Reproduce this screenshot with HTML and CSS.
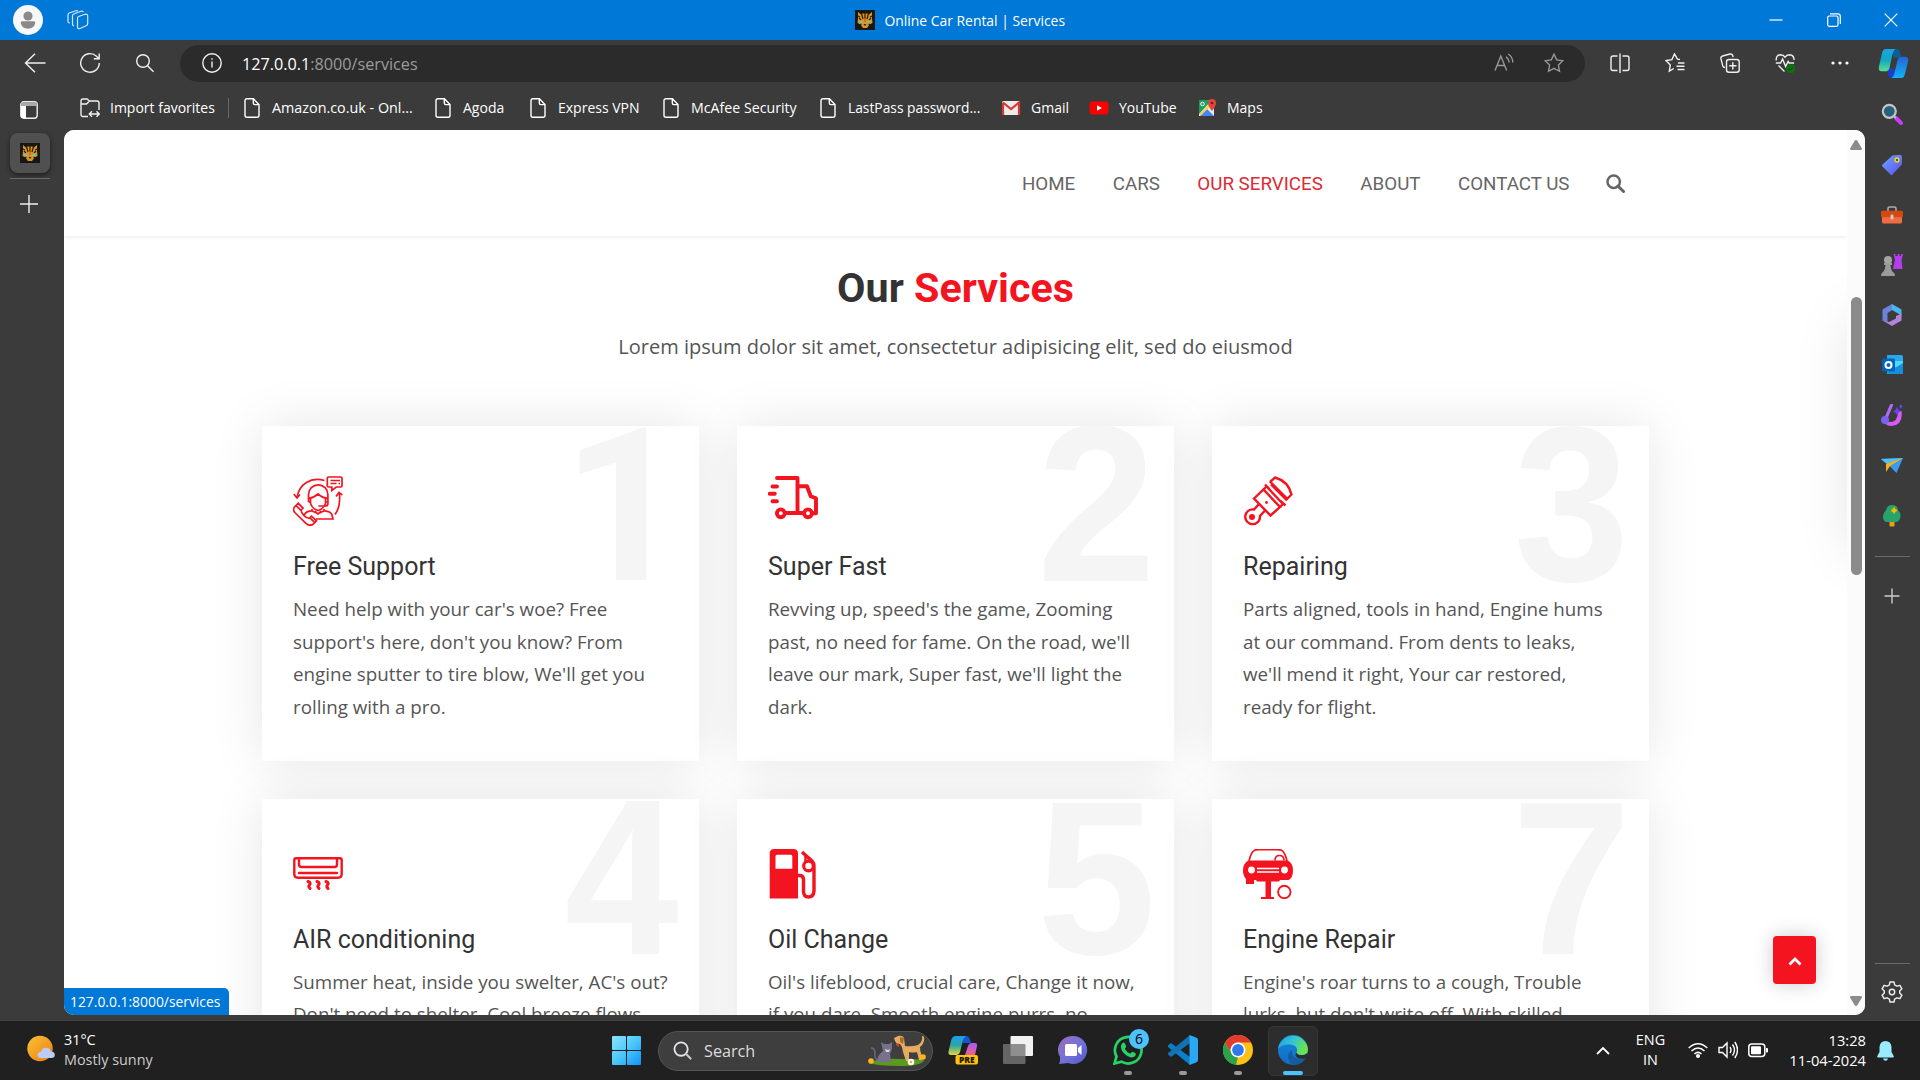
FILE: index.html
```html
<!DOCTYPE html>
<html lang="en">
<head>
<meta charset="utf-8">
<title>Online Car Rental | Services</title>
<link rel="stylesheet" href="styles.css">
</head>
<body>
<svg class="defs" aria-hidden="true">
  <symbol id="doc" viewBox="0 0 20 20"><path d="M4.2.8h7.2L17 6.5v10.800a1.900 1.900 0 0 1-1.900 1.900H4.900A1.900 1.900 0 0 1 3 17.300V2.700A1.900 1.900 0 0 1 4.900.8M11.300 1v4.100a1.500 1.500 0 0 0 1.500 1.500h4" fill="none" stroke="#fff" stroke-width="1.400"/></symbol>
  <symbol id="cat" viewBox="0 0 20 20">
    <path d="M0 0h20v20H0z" fill="#171717"/>
    <path d="M3 2l3 2.500 1.500-1h5l1.500 1L17 2v6l.5 5-3 1.500L12 18H8l-2.500-3.500L2.500 13 3 8z" fill="#d9981c"/>
    <path d="M6.500 3.500L8 9M10 3V9M13.500 3.500L12 9M4 8l2 2M16 8l-2 2M4.500 15l2-1M15.500 15l-2-1M3 6l2 1M17 6l-2 1" stroke="#2a1a08" stroke-width="1.200"/>
    <path d="M9.400 8h1.200v4H9.400z" fill="#e2542a"/>
    <path d="M4.500 11l3 1.800M15.500 11l-3 1.800" stroke="#54c8f0" stroke-width="1.700"/>
    <path d="M8.500 14h3L10 16z" fill="#222"/>
  </symbol>
</svg>

<header class="titlebar">
  <svg class="avatar" viewBox="0 0 30 30"><circle cx="15" cy="15" r="15" fill="#f8f8f8"/><circle cx="15" cy="11" r="4.600" fill="#8a8a8a"/><path d="M9 16.300h12a1.200 1.200 0 0 1 1.200 1.200c0 3.700-3.300 6.200-7.200 6.200s-7.200-2.500-7.200-6.200A1.200 1.200 0 0 1 9 16.300z" fill="#8a8a8a"/></svg>
  <svg class="workspaces" viewBox="0 0 22 20"><g fill="none" stroke="#d5e8f9" stroke-width="1.200"><path d="M11.500 6.500l6.500-2.200q2.700-.6 2.700 1.700v7.500q0 1.500-1.500 2.200l-6.200 2.800q-2.500.8-2.500-1.500V8.500q0-1.500 1-2z"/><path d="M7 15.500q-1.500.3-1.500-1.500V6q0-1.500 1.200-2l7.300-2.800q1.500-.5 2.500.8M3 13q-2 0-2-1.500V5q0-1.500 1.200-2L9 .7q1-.3 2 .3"/></g></svg>
  <div class="window-title"><svg class="i20"><use href="#cat"/></svg><span>Online Car Rental | Services</span></div>
  <div class="window-buttons">
    <svg viewBox="0 0 14 14"><path d="M.5 7h13" stroke="#fff" stroke-width="1.200"/></svg>
    <svg viewBox="0 0 14 14"><g fill="none" stroke="#fff" stroke-width="1.200"><rect x=".7" y="3" width="10.300" height="10.300" rx="1.500"/><path d="M3 .8h7.800a2.500 2.500 0 0 1 2.500 2.500V11"/></g></svg>
    <svg viewBox="0 0 14 14"><path d="M.7.7l12.600 12.600M13.300.7L.7 13.300" stroke="#fff" stroke-width="1.200"/></svg>
  </div>
</header>

<div class="toolbar">
  <button class="tool"><svg class="i22" viewBox="0 0 22 22"><path d="M21.500 11H1.500M11 1.800L1.500 11l9.500 9.200" class="line"/></svg></button>
  <button class="tool"><svg class="i22" viewBox="0 0 22 22"><path d="M20.300 11A9.300 9.300 0 1 1 17.500 4.300L19.800 6.500M20.200 1.500v5.300h-5.400" class="line"/></svg></button>
  <button class="tool"><svg class="i20" viewBox="0 0 20 20"><circle cx="8" cy="8" r="6.300" class="line"/><path d="M12.500 12.700l6 6" class="line"/></svg></button>
  <div class="address">
    <svg class="i20" viewBox="0 0 20 20"><circle cx="10" cy="10" r="9.200" class="line"/><path d="M10 8.500v6M10 5.200v1.600" class="line"/></svg>
    <span class="url">127.0.0.1<span>:8000/services</span></span>
    <svg class="i20 dim" viewBox="0 0 20 20"><path d="M1 17.500L6.800 3l5.900 14.500M3 12.500h7.700M12 3.800q3 2 3 5.700M14.200 1q4.600 3 4.600 8.500" class="line"/></svg>
    <svg class="i20 dim" viewBox="0 0 20 20"><path d="M10 1.200l2.700 5.700 6.200.8-4.500 4.400 1.100 6.200L10 15.300l-5.500 3 1.100-6.200L1.100 7.700l6.200-.8z" class="line"/></svg>
  </div>
  <button class="tool"><svg class="i20" viewBox="0 0 20 20"><path d="M7.500 3H3a2 2 0 0 0-2 2v10.500a2 2 0 0 0 2 2h4.500M12.500 3H17a2 2 0 0 1 2 2v10.500a2 2 0 0 1-2 2h-4.500M10 .5v19.500" class="line"/></svg></button>
  <button class="tool"><svg class="i20" viewBox="0 0 20 20"><path d="M15 6.500l-2.600-.3L9.500.9 6.900 6.600 1 7.600l4.300 4.300-1 6.200 4.500-2.600M13 10h6.500M11.500 13.200h8M12.500 16.500h7" class="line"/></svg></button>
  <button class="tool"><svg class="i20" viewBox="0 0 20 20"><path d="M5 14.500q-1.600 0-2.200-1.600L.9 5.700Q.5 3.600 2.600 3L9.900 1q2-.4 2.800 1.400l.4 1.800" class="line"/><rect x="6.500" y="6.500" width="12.700" height="12.700" rx="2.500" class="line"/><path d="M12.800 9.200v7.300M9.200 12.800h7.300" class="line"/></svg></button>
  <button class="tool"><svg class="i20" viewBox="0 0 20 20"><path d="M1.200 7.500Q.8 2 5.500 1.700 8.500 1.700 10 4.200 11.700 1.700 14.500 1.700q4.700.3 4.500 5.300M.8 10h4.800l2-4 3 7.500 2.500-5 1 1.500h5M3.500 12.500l6 6" class="line"/><circle cx="15.700" cy="15.700" r="4.600" fill="#0e700e"/><path d="M13.800 15.800l1.400 1.300 2.500-2.600" stroke="#063c06" fill="none"/></svg></button>
  <button class="tool"><svg class="i20" viewBox="0 0 20 20" fill="#fff"><circle cx="3" cy="10" r="1.600"/><circle cx="10" cy="10" r="1.600"/><circle cx="17" cy="10" r="1.600"/></svg></button>
  <button class="tool last"><svg class="copilot" viewBox="0 0 32 32"><defs><linearGradient id="cp1" x1="0" y1="0" x2="0" y2="1"><stop offset="0" stop-color="#1ba5e8"/><stop offset=".5" stop-color="#12a8c0"/><stop offset="1" stop-color="#5fdc8f"/></linearGradient><linearGradient id="cp2" x1="0" y1="1" x2="0" y2="0"><stop offset="0" stop-color="#12b4f4"/><stop offset="1" stop-color="#2564d6"/></linearGradient></defs><path d="M14 1h5q3 0 4 4l1 5h-8z" fill="#0c5f96"/><path d="M9 22l4-1 6 2-2 8h-2q-3 0-4-3z" fill="#1c3ecf"/><path d="M8 1h10q-2 1-3 5l-3 14q-1 4-5 4H4q-4 0-3-5L4 6q1-5 4-5z" fill="url(#cp1)"/><path d="M24 31H14q2-1 3-5l3-13q1-4 5-4h3q4 0 3 5l-3 12q-1 5-4 5z" fill="url(#cp2)"/></svg></button>
</div>

<div class="shell">
  <aside class="tabs">
    <svg class="i18 tab-menu" viewBox="0 0 18 18"><rect x=".8" y=".8" width="16.400" height="16.400" rx="3" class="line"/><path d="M1 1.500h16v3.500H1z" fill="#aaa"/><path d="M1 5h5v12H1z" fill="#fff"/></svg>
    <div class="tab"><svg class="i20"><use href="#cat"/></svg></div>
    <hr>
    <svg class="i18 new-tab" viewBox="0 0 18 18"><path d="M9 0v18M0 9h18" class="line"/></svg>
  </aside>

  <div class="center">
    <nav class="favorites">
      <a><svg class="i20" viewBox="0 0 20 20"><path d="M8 18.500H3a2 2 0 0 1-2-2V3a2 2 0 0 1 2-2h4l2.500 2H17a2 2 0 0 1 2 2v7M1 6h5.500L9.500 3M9.500 16h9.500M12 13.300L9.300 16l2.700 2.700M16.500 13.300l2.700 2.700-2.700 2.700" class="line"/></svg><span>Import favorites</span><i></i></a>
      <a><svg class="i20"><use href="#doc"/></svg><span class="w-amazon">Amazon.co.uk - Onl...</span></a>
      <a><svg class="i20"><use href="#doc"/></svg><span>Agoda</span></a>
      <a><svg class="i20"><use href="#doc"/></svg><span>Express VPN</span></a>
      <a><svg class="i20"><use href="#doc"/></svg><span class="w-mcafee">McAfee Security</span></a>
      <a><svg class="i20"><use href="#doc"/></svg><span class="w-lastpass">LastPass password...</span></a>
      <a><svg class="i20" viewBox="0 0 20 20"><rect x="1" y="3" width="18" height="14" rx="1.500" fill="#ececec"/><path d="M2 4.500l8 6.500 8-6.500V17M2 4.500V17" fill="none" stroke="#d93a30" stroke-width="2.200"/></svg><span>Gmail</span></a>
      <a><svg class="i20" viewBox="0 0 20 20"><rect x=".5" y="3.500" width="19" height="13" rx="3" fill="#f00"/><path d="M8 7.300l5 2.700-5 2.700z" fill="#fff"/></svg><span>YouTube</span></a>
      <a><svg class="i20" viewBox="0 0 20 20"><path d="M2 2h15v16H2z" fill="#e8e8e8"/><path d="M2 2h13L2 16z" fill="#1e9e5a"/><path d="M3 18l7-7 7 7z" fill="#4385f5"/><path d="M3 17L16 4" stroke="#f8cf3f" stroke-width="2"/><path d="M15 13q-4-5-4-8a4 4 0 0 1 8 0q0 3-4 8z" fill="#e2443a"/><circle cx="15" cy="5" r="1.300" fill="#7c1a14"/><circle cx="5.500" cy="6" r="1.800" fill="none" stroke="#fff"/></svg><span>Maps</span></a>
    </nav>

    <div class="page">
      <div class="site">
        <div class="carousel-edge"></div>
        <nav class="site-nav">
          <a>HOME</a><a>CARS</a><a class="active">OUR SERVICES</a><a>ABOUT</a><a>CONTACT US</a>
          <svg viewBox="0 0 19 19"><circle cx="7.700" cy="7.700" r="6.200" fill="none" stroke="#666" stroke-width="2.500"/><path d="M12 12l5.500 5.500" stroke="#666" stroke-width="3" stroke-linecap="round"/></svg>
        </nav>
        <main>
          <h1>Our <span>Services</span></h1>
          <p class="lead">Lorem ipsum dolor sit amet, consectetur adipisicing elit, sed do eiusmod</p>
          <section class="cards">
            <article class="card">
              <b class="number one">1</b>
              <svg viewBox="0 0 50 50"><g fill="none" stroke="#f41420" stroke-width="1.700"><path d="M31.500 4.500C18 .5 6 8 4 21.500M.8 18L4 22l3-3.500"/><path d="M42 38.500q6-8 4.300-21.500M43 20.500l3-4 3.300 2.500"/><path d="M35.500 1h12.300q1.200 0 1.200 1.200v7.600q0 1.200-1.200 1.200h-4.500l-4.500 3.500V11h-3.300q-1.200 0-1.200-1.200V2.200Q34.300 1 35.500 1z"/><path d="M37.500 4.500H47M37.500 7.500h6M45.500 7.500H47"/><path d="M15.500 26v-7.500a9.700 9.700 0 0 1 19.400 0V28q0 2-3 2h-6.500M15.500 22.500q5-.5 9.500-4.500 4.500 4 10 4.500M17.500 22.500v5q2 5.500 7.500 7 5.500-1.500 7.500-7v-5M15.500 26h2M35 26h-2.500M19 33v2l6 2.500 6-2.500v-2M22 35l3 3 3-3"/><path d="M11.500 39q.5-3.500 7-4.200M31.500 34.800q6.500.7 7.300 3.700l1.200 4.500H23"/><path d="M1.500 31l3.700-3.700 4.800 4.800-2 2q0 2.500 3 5.500t5.500 2.600l2-2 5 4.600-3.500 3.500q-3.500 2.200-7-1L2.300 37Q-.8 33.700 1.500 31zM3 29.500l4.700 4.700M17 41.800l4.800 4.800"/></g></svg>
              <h2>Free Support</h2>
              <p>Need help with your car's woe? Free support's here, don't you know? From engine sputter to tire blow, We'll get you rolling with a pro.</p>
            </article>
            <article class="card">
              <b class="number">2</b>
              <svg viewBox="0 0 50 50"><g fill="none" stroke="#f41420" stroke-width="3.900" stroke-linecap="round" stroke-linejoin="round"><path d="M9 2h20.500v34.500M29.500 10.300H39l3.700 10 5.300 2v15h-3M17.500 37h17"/><path d="M4.500 10.500h4.500M1.800 17.800h5M4.500 25.300h4.500"/><circle cx="12.800" cy="37.300" r="3.900"/><circle cx="40" cy="37.300" r="3.900"/></g></svg>
              <h2>Super Fast</h2>
              <p>Revving up, speed's the game, Zooming past, no need for fame. On the road, we'll leave our mark, Super fast, we'll light the dark.</p>
            </article>
            <article class="card">
              <b class="number three">3</b>
              <svg viewBox="0 0 50 50"><g fill="none" stroke="#f41420" stroke-width="2.400"><path d="M11 22.500l9.500-9L37 31l-9.500 8.500z"/><path d="M20.500 13.500l3-3M37 31l3-3M24.500 11.500L40 28M28 8.500L44 24.500M22 8.500l4.500 4.500M37.500 25l5 4.500M27 5.500l17 17M27 6L32 1.500C41 4 46.500 10.500 48.500 18.500L44 23"/><path d="M16.500 27.500L11 33.500a7.400 7.400 0 1 0 6 6.500l5-5.500"/></g><circle cx="9" cy="41" r="3" fill="#f41420"/><circle cx="23.500" cy="26.500" r="1.400" fill="#f41420"/></svg>
              <h2>Repairing</h2>
              <p>Parts aligned, tools in hand, Engine hums<br>at our command. From dents to leaks,<br>we'll mend it right, Your car restored,<br>ready for flight.</p>
            </article>
            <article class="card">
              <b class="number four">4</b>
              <svg viewBox="0 0 50 50"><g fill="none" stroke="#f41420" stroke-width="2.400" stroke-linecap="round"><path d="M3 9.300h44q1.700 0 1.700 1.700v14q0 3.700-3.700 3.700H5q-3.700 0-3.700-3.700V11q0-1.700 1.700-1.700z"/><path d="M6 10v5.500q0 2.500 2.500 2.500h33q2.500 0 2.500-2.500V10M6 24h38"/><path d="M15 32.500q3.500 1.500 1.500 3.500-1.500 1.500.5 3.500M24 32.500q3.500 1.500 1.500 3.500-1.500 1.500.5 3.500M33 32.500q3.500 1.500 1.500 3.500-1.500 1.500.5 3.500" stroke-width="3"/></g></svg>
              <h2>AIR conditioning</h2>
              <p>Summer heat, inside you swelter, AC's out? Don't need to shelter. Cool breeze flows, comfort grows.</p>
            </article>
            <article class="card">
              <b class="number low">5</b>
              <svg viewBox="0 0 50 50"><path fill="#f41420" fill-rule="evenodd" d="M6 0h19.500q4.500 0 4.500 4.500V49.500H1.700V4.500Q1.700 0 6 0zM9 5.700q-1.500 0-1.500 1.500v12.500H24.300V7.200q0-1.500-1.500-1.500z"/><g fill="none" stroke="#f41420"><path d="M30 26.500h1.500q4 0 4 4v11.500q0 6 5 6t5.500-6V17Q46 14 44 12L34 3" stroke-width="3.400"/><circle cx="40.500" cy="17" r="4.800" stroke-width="3.200"/><path d="M37.500 7v7" stroke-width="2.500"/></g></svg>
              <h2>Oil Change</h2>
              <p>Oil's lifeblood, crucial care, Change it now, if you dare. Smooth engine purrs, no trouble stirs.</p>
            </article>
            <article class="card">
              <b class="number low">7</b>
              <svg viewBox="0 0 50 50"><path fill="#f41420" d="M5 11.500h40q5 3 5 9.500 0 8-4.500 10H37l-1 1.500h-8V48h3v2H18v-2h4.500V32.500H14l-1-1.500h-2v4H3v-5q-3-3-3-9t5-9.500z"/><path d="M6 12Q8 3 11.500 1.200q1-.5 4-.5h19q3 0 4 .5Q42 3 44 12M32 11.500q0-5 4.500-5t4.500 5" fill="none" stroke="#f41420" stroke-width="1.700"/><circle cx="8.500" cy="21" r="3.400" fill="#fff"/><circle cx="41.500" cy="21" r="3.400" fill="#fff"/><path d="M14 19.500h22M14 23h22" stroke="#fff" stroke-width="1.300"/><circle cx="41.300" cy="43" r="6.200" fill="none" stroke="#f41420" stroke-width="1.900"/></svg>
              <h2>Engine Repair</h2>
              <p>Engine's roar turns to a cough, Trouble lurks, but don't write off. With skilled hands, it stands.</p>
            </article>
          </section>
        </main>
        <a class="to-top"><svg viewBox="0 0 14 9"><path d="M1.500 7.500L7 2l5.500 5.500" fill="none" stroke="#fff" stroke-width="2.800"/></svg></a>
      </div>
      <div class="scrollbar">
        <svg viewBox="0 0 12 10"><path d="M6 0q.8 0 1.300.8l4.500 7.400q.5 1.800-1 1.800H1.200q-1.500 0-1-1.800L4.700.8Q5.200 0 6 0z" fill="#8b8b8b"/></svg>
        <div class="thumb"></div>
        <svg class="down" viewBox="0 0 12 10"><path d="M6 0q.8 0 1.300.8l4.500 7.400q.5 1.800-1 1.800H1.200q-1.500 0-1-1.800L4.700.8Q5.200 0 6 0z" fill="#8b8b8b"/></svg>
      </div>
      <div class="status">127.0.0.1:8000/services</div>
    </div>
  </div>

  <aside class="sidebar">
    <a><svg class="i22" viewBox="0 0 22 22"><path d="M15 15l5 5" stroke="#c63df5" stroke-width="4" stroke-linecap="round"/><path d="M12.500 12.500l2.500 2.500" stroke="#bbb" stroke-width="2"/><circle cx="8.300" cy="8.300" r="6.500" fill="#24607f" stroke="#c4c4c4" stroke-width="2.200"/></svg></a>
    <a><svg class="i22" viewBox="0 -1 22 22"><defs><linearGradient id="tg" x2="1" y2="1"><stop stop-color="#6fa8ff"/><stop offset="1" stop-color="#5a4df0"/></linearGradient></defs><path d="M11.500 1.500L19 .8q2 0 2 2v7.500L11.500 20.500q-1 1-2 0L1.500 12.500q-1-1 0-2z" fill="url(#tg)"/><circle cx="16" cy="6" r="2.700" fill="#f2cb23"/><circle cx="16" cy="6" r="1" fill="#333"/></svg></a>
    <a><svg class="i22" viewBox="0 -2 22 22"><path d="M7 6V3.500Q7 2 8.500 2h5Q15 2 15 3.500V6" fill="none" stroke="#aaa" stroke-width="1.600"/><rect x="1" y="8" width="20" height="10.500" rx="1.500" fill="#ef6c42"/><rect x="0" y="5.700" width="22" height="6.500" rx="1.200" fill="#d5480f"/><rect x="9.500" y="9.500" width="3" height="5" rx="1.200" fill="#c9c9c9"/></svg></a>
    <a><svg class="i22" viewBox="0 0 22 22"><path d="M12.500 0h2v2h2V0h2v2h1.500V0h2l-1.500 6 1 9H12l2-9z" fill="#b43df0"/><circle cx="7" cy="6" r="4" fill="#a5a5a5"/><path d="M3 9h8v2H9.500q0 5 3.500 8 1 1 1 3H0q0-2 1-3 3.500-3 3.500-8H3z" fill="#9b9b9b"/></svg></a>
    <a><svg class="i22" viewBox="0 0 22 22"><path d="M11 0l9.500 5.500v6L11 6 7.500 8z" fill="#45b9ec"/><path d="M11 0L1.500 5.500v11l5 1.500V9L11 6z" fill="#6b83dd"/><path d="M1.500 16.500L11 22l9.500-5.500v-7L15 12v2.500L8 18z" fill="#b184d8"/></svg></a>
    <a><svg class="i22" viewBox="-1 0 22 22"><path d="M5 1h14.500q1.500 0 1.500 1.500V20H5z" fill="#28a8ea"/><path d="M13 7h8v6h-8z" fill="#50d9ff"/><path d="M4 20h17V9l-8 5z" fill="#1490df"/><rect x="0" y="4.500" width="13" height="13" rx="1.500" fill="#0364b8"/><circle cx="6.500" cy="11" r="3" fill="none" stroke="#fff" stroke-width="2"/></svg></a>
    <a><svg class="i22" viewBox="0 0 22 22"><path d="M2.500 13q1 5 7 5 7 0 7.500-10l3.500-1q2 14-10 15Q3 22 1 14z" fill="#d65bf0"/><path d="M10.500 1L5 14" stroke="#a86cf5" stroke-width="3.200" stroke-linecap="round"/><circle cx="4" cy="16" r="4" fill="#7a62f0"/><path d="M16 3l1.500 3 3 1-3 1.500L16 11l-1.500-2.500-2.500-1L14.500 6zM20 0l1 2 1 .5-1.500 1L20 5l-1-1.500-1-1z" fill="#6644f0"/></svg></a>
    <a><svg class="i22" viewBox="0 0 22 22"><path d="M0 5l22-1-6.500 15-6-6z" fill="#3b9bea"/><path d="M0 5l22-1L6 10z" fill="#4cc2f5"/><path d="M5 10L22 4 9 12l-4 6z" fill="#f5b21b"/></svg></a>
    <a><svg class="i22" viewBox="0 0 22 22"><path d="M8.500 15h5v5.500q0 1-1 1h-3q-1 0-1-1z" fill="#eaa012"/><path d="M11 0q5.500 0 6 5 3 3 2.500 6.500-1 5.500-5 5.500h-8q-4.500 0-4.500-5 0-4 3-6.500Q6 0 11 0z" fill="#27a36b"/><path d="M13 2.500l1.200 1.800 1.800 1.200-1.800 1.200L13 8.500l-1.200-1.800L10 5.500l1.800-1.200z" fill="#f8b800" stroke="#f8b800"/></svg></a>
    <hr>
    <svg class="i18 add" viewBox="0 0 18 18"><path d="M9 1.500v15M1.500 9h15" class="line"/></svg>
    <hr class="bottom">
    <svg class="i22 gear" viewBox="0 0 22 22"><path d="M9 1h4l.7 3 2.200 1.200 3-.9 2 3.500-2.200 2.100v2.200l2.200 2.100-2 3.500-3-.9-2.200 1.200L13 21H9l-.7-3-2.200-1.200-3 .9-2-3.500 2.200-2.100V9.900L1.100 7.800l2-3.500 3 .9L8.300 4z" class="line" stroke-linejoin="round"/><circle cx="11" cy="11" r="2.700" class="line"/></svg>
  </aside>
</div>

<footer class="taskbar">
  <div class="weather">
    <svg viewBox="0 0 28 28"><defs><linearGradient id="sun" x1="0" y1="0" x2="1" y2="1"><stop stop-color="#f7c436"/><stop offset="1" stop-color="#f07a12"/></linearGradient></defs><circle cx="13" cy="13.500" r="12.700" fill="url(#sun)"/><path d="M14 23q-3.500 0-3.500-3t3.500-3.200q1-4 5-4 4.300 0 4.800 3.800 4 .2 4 3.400T24 23z" fill="#b9cdf6"/></svg>
    <div><span>31°C</span><span class="sub">Mostly sunny</span></div>
  </div>
  <svg class="start" viewBox="0 0 29 29"><defs><linearGradient id="win" gradientUnits="userSpaceOnUse" x1="0" y1="0" x2="29" y2="29"><stop stop-color="#8de2fb"/><stop offset=".5" stop-color="#4cc8fa"/><stop offset="1" stop-color="#0f92f8"/></linearGradient></defs><g fill="url(#win)"><rect width="14" height="14" rx="1"/><rect x="15" width="14" height="14" rx="1"/><rect y="15" width="14" height="14" rx="1"/><rect x="15" y="15" width="14" height="14" rx="1"/></g></svg>
  <div class="search">
    <svg class="lens" viewBox="0 0 20 20"><circle cx="8.500" cy="8.500" r="7" fill="none" stroke="#e4e4ea" stroke-width="1.900"/><path d="M13.500 13.500l5 5" stroke="#c9c9cf" stroke-width="2.200" stroke-linecap="round"/></svg>
    <span>Search</span>
    <svg class="pets" viewBox="0 0 60 32"><path d="M1 28q12-5 30-4 20 0 26 1-2 6-24 6T1 28z" fill="#5c9a1c"/><path d="M11 26q-4-3-3-8 0-5-4-5" stroke="#6d6780" stroke-width="1.500" fill="none"/><path d="M10 27q0-7 6-11l-2-9 3 2h5l3-2v6q0 3-2 5l1 9z" fill="#77718c"/><path d="M18 14l3 1 2-1-1 3h-3z" fill="#d8d4e0"/><path d="M27 3l4-2q5-1 6 2l1 8q6 1 13-1 5-3 4-9 3 0 2 5-1 4-4 6 0 4 1 6l1 7h-3l-2-8q-4 1-8 0v9h-3l-3-9-1-5-2-3h-3l-2-3z" fill="#e5ac60"/><path d="M33 2l4 1-1 6-3-2z" fill="#a96a2a"/><path d="M29 9l3-1v4l-2-1z" fill="#d5432f"/><g fill="#ffb61b"><circle cx="4" cy="26" r="2.800"/><circle cx="56" cy="22" r="2.800"/></g><circle cx="44" cy="27" r="3.300" fill="#fff"/><circle cx="44" cy="27" r="1.300" fill="#f5b21b"/></svg>
  </div>
  <div class="apps">
    <div class="app"><svg viewBox="0 0 30 30"><defs><linearGradient id="pr1" x1="0" y1="0" x2="0" y2="1"><stop stop-color="#1e9bf2"/><stop offset=".5" stop-color="#2aa7a0"/><stop offset="1" stop-color="#e8d53c"/></linearGradient><linearGradient id="pr2" x1="0" y1="0" x2="0" y2="1"><stop stop-color="#a45cf0"/><stop offset="1" stop-color="#f2608f"/></linearGradient></defs><path d="M12 1h7q3 1 4 7h-8z" fill="#1756c8"/><path d="M8 1h10q-3 2-4 8l-2 8q-1 3-4 3H3q-3 0-2.500-3.500L3 6q1-5 5-5z" fill="url(#pr1)"/><path d="M17 20l3-9q1-3 4-3h3q2.500 0 2 3l-2 9z" fill="url(#pr2)"/><rect x="7.500" y="20" width="22.500" height="9.500" rx="2" fill="#ffc20d"/><text x="18.800" y="27.700" text-anchor="middle" class="pre">PRE</text></svg></div>
    <div class="app"><svg viewBox="0 0 30 30"><rect x="7.500" y="1" width="22.500" height="20" rx="1" fill="#f1f1f1"/><rect x="0" y="9" width="22.500" height="20" rx="1" fill="#777" opacity=".8"/></svg></div>
    <div class="app"><svg viewBox="0 0 30 30"><defs><linearGradient id="ch" x1="0" y1="0" x2="1" y2="1"><stop stop-color="#9a6cb8"/><stop offset=".5" stop-color="#7573d8"/><stop offset="1" stop-color="#5059c9"/></linearGradient></defs><path d="M15 1a14 14 0 1 1-5 27l-9 1q1.500-3 1-7A14 14 0 0 1 15 1z" fill="url(#ch)"/><rect x="7" y="9" width="12" height="12" rx="1.500" fill="#fff"/><path d="M20 13l3.500-3v10L20 17z" fill="#fff"/></svg></div>
    <div class="app run"><svg viewBox="0 0 30 30"><path d="M1.500 28.500l2-7A13.300 13.300 0 1 1 8.500 26.700z" fill="none" stroke="#25d366" stroke-width="2.700"/><path d="M9.500 8q1.500-1 2.500.5l1.200 2.800q0 1-1.500 2.500 2 3.500 5.500 5 1.500-2 2.500-2l2.800 1.500q1 1-.5 3-3 2.500-8-.5Q8.500 17 8 12.500 7.500 9.800 9.500 8z" fill="#25d366"/></svg><span class="badge">6</span></div>
    <div class="app run"><svg viewBox="0 0 30 30"><path d="M0 10.500L3 8l19 14v8L0 12z" fill="#0a7fca"/><path d="M0 19.500L3 22 22 8V0L0 18z" fill="#1272b4"/><path d="M21.500 0L28 2.500q2 .8 2 2.500v20q0 1.700-2 2.500L21.500 30z" fill="#2ba8f2"/></svg></div>
    <div class="app run"><svg viewBox="0 0 30 30"><circle cx="15" cy="15" r="15" fill="#fbc116"/><path d="M2 7.500L8.700 18.500 15 22l-2 8A15 15 0 0 1 2 7.500z" fill="#2ba24c"/><path d="M2 7.500A15 15 0 0 1 28 7.500H15a7.500 7.500 0 0 0-6.800 10.500z" fill="#e33b2e"/><circle cx="15" cy="15" r="7.500" fill="#fff"/><circle cx="15" cy="15" r="5.900" fill="#2f79ee"/></svg></div>
    <div class="app run current"><svg viewBox="0 0 30 30"><defs><linearGradient id="e1" x1="0" y1="0" x2="1" y2=".4"><stop stop-color="#1e9de0"/><stop offset=".5" stop-color="#33c3d8"/><stop offset="1" stop-color="#6be34f"/></linearGradient><linearGradient id="e2" x1="0" y1="0" x2="0" y2="1"><stop stop-color="#1788dc"/><stop offset="1" stop-color="#0f6cc4"/></linearGradient></defs><circle cx="15" cy="15" r="15" fill="url(#e2)"/><path d="M16 30q8 0 12.500-8-6 3-11 1-4-2-3.500-8-5 3-3.500 9 1.500 5 5.500 6z" fill="#165a9f"/><path d="M.3 13.500A15 15 0 0 1 30 14q0 6-6.500 6-5 0-5-2.500 1-2 .5-3.500-1-4-6.500-4.500Q4 9 .3 13.500z" fill="url(#e1)"/><path d="M18.700 17.500q0 2.500 5 2.700 3.500 0 5.800-2l.5 4-1.500 1q-5 1.500-9-.5-3.500-2.500-.8-5.200z" fill="#2d2d2d"/></svg></div>
  </div>
  <svg class="chevron" viewBox="0 0 14 9"><path d="M1 8l6-6 6 6" fill="none" stroke="#fff" stroke-width="1.800"/></svg>
  <div class="lang"><span>ENG</span><span>IN</span></div>
  <div class="tray">
    <svg viewBox="0 0 20 20"><g fill="none" stroke="#fff" stroke-width="1.500"><path d="M.7 8q9.300-8.500 18.600 0M3.500 11q6.500-6 13 0M6.500 14q3.500-3.200 7 0"/></g><circle cx="10" cy="16" r="2" fill="#fff"/></svg>
    <svg viewBox="0 0 20 20"><g fill="none" stroke="#fff" stroke-width="1.400"><path d="M1 7.500h3.500L9 3v14l-4.500-4.500H1zM12 7q2 3 0 6M14.500 4.500q4 5.500 0 11M16.800 2q5.500 8 0 16"/></g></svg>
    <svg viewBox="0 0 20 20"><rect x=".8" y="4" width="16" height="12.500" rx="3" fill="none" stroke="#fff" stroke-width="1.500"/><rect x="3" y="6.200" width="10" height="8" rx="1" fill="#fff"/><path d="M18 8h1q1 0 1 1v2.500q0 1-1 1h-1z" fill="#fff"/></svg>
  </div>
  <div class="clock"><span>13:28</span><span>11-04-2024</span></div>
  <svg class="bell" viewBox="0 0 17 20"><path d="M8.500 0Q14 0 14.500 6v5l2.300 4.300q.3 1.200-1 1.200H1.200q-1.300 0-1-1.200L2.500 11V6Q3 0 8.500 0zM6 17.500h5q-.5 2.300-2.500 2.300T6 17.500z" fill="#99ebff"/></svg>
</footer>
</body>
</html>
```
FILE: styles.css
```css
* { box-sizing: border-box; }
body {
  margin: 0;
  width: 1920px;
  height: 1080px;
  overflow: hidden;
  display: flex;
  flex-direction: column;
  background: #3b3b3b;
  color: #fff;
  font: 14px "Open Sans", "Noto Sans", sans-serif;
}
svg { display: block; flex: none; }
button { border: 0; padding: 0; background: none; color: inherit; }
hr { margin: 0; border: 0; height: 1px; background: #6a6a6a; flex: none; }
.defs { width: 0; height: 0; position: absolute; }
.line { fill: none; stroke: #f0f0f0; stroke-width: 1.4; }
.i18 { width: 18px; height: 18px; }
.i20 { width: 20px; height: 20px; }
.i22 { width: 22px; height: 22px; }

/* Window title */
.titlebar { flex: none; height: 40px; background: #0078d7; display: flex; align-items: center; }
.avatar { width: 30px; height: 30px; margin-left: 13px; }
.workspaces { width: 22px; height: 20px; margin-left: 24px; }
.window-title { display: flex; align-items: center; gap: 9.5px; margin-left: 766px; font-size: 13.9px; white-space: nowrap; }
.window-buttons { display: flex; gap: 43.5px; margin-left: auto; margin-right: 22px; }
.window-buttons svg { width: 14px; height: 14px; }

/* Toolbar */
.toolbar { flex: none; height: 48px; padding: 0 0 2px 7px; display: flex; align-items: center; }
.tool { width: 55px; height: 46px; display: flex; align-items: center; justify-content: center; }
.tool.last { width: 52px; }
.copilot { width: 31px; height: 33px; }
.address {
  flex: none; width: 1405px; height: 37px; margin: 0 7px 0 8px; padding: 0 21px 0 22px;
  border-radius: 19px; background: #2b2b2b; display: flex; align-items: center; gap: 30px;
}
.url { flex: 1; margin-left: -10px; padding-top: 2px; font-size: 16.2px; }
.url span { color: #9b9b9b; }
.dim { opacity: .55; }

/* Browser body */
.shell { flex: none; height: 932px; display: grid; grid-template-columns: 64px 1801px 55px; }
.tabs { display: flex; flex-direction: column; align-items: center; padding: 13px 6px 0 0; }
.tab {
  width: 40px; height: 40px; margin: 14px 0 5px 2px; border-radius: 8px; background: #505050;
  box-shadow: 0 2px 5px rgba(0, 0, 0, .5); display: flex; align-items: center; justify-content: center;
}
.tabs hr { width: 40px; margin-left: 2px; }
.new-tab { margin-top: 16px; }
.center { display: flex; flex-direction: column; min-width: 0; }
.favorites {
  height: 42px; padding: 0 0 2px 16px; display: grid; align-items: center;
  grid-template-columns: 162px 191px 95px 133px 157px 183px 88px 108px auto;
}
.favorites a { display: flex; align-items: center; gap: 10px; white-space: nowrap; }
.favorites span { padding-bottom: 2px; }
.favorites i { width: 1px; height: 20px; margin-left: 3px; background: #666; }
.w-amazon { font-size: 14.35px; }
.w-mcafee { font-size: 14.2px; }
.w-lastpass { font-size: 13.8px; }

/* Web page */
.page { position: relative; height: 885px; display: flex; border-radius: 10px; overflow: hidden; background: #fff; }
.site { position: relative; width: 1783px; overflow: hidden; color: #555; }
.site-nav {
  position: relative; height: 106px; padding-right: 222px; background: #fff; box-shadow: 0 1px 4px rgba(0, 0, 0, .09);
  display: flex; align-items: center; justify-content: flex-end; gap: 37.5px; color: #666;
  font: 18.75px Roboto, sans-serif;
}
.site-nav a { padding-top: 1px; }
.site-nav .active { color: #dc2a35; }
.site-nav svg { width: 19px; height: 19px; margin-left: -1px; }
main { padding: 27px 198px 0; }
h1 { margin: 0; text-align: center; font: bold 41.25px/50px Roboto, sans-serif; color: #333; }
h1 span { color: #f41420; }
.lead { margin: 17px 0 62px; text-align: center; font-size: 20px; line-height: 34px; }
.cards { display: grid; grid-template-columns: repeat(3, 437px); gap: 37.5px 38px; }
.card {
  position: relative; height: 335px; padding: 50px 31px 0; background: #fff;
  box-shadow: 0 0 50px rgba(0, 0, 0, .1);
}
.card svg { position: relative; width: 50px; height: 50px; }
.card h2 { margin: 26.3px 0 11.2px; font: 25px/30px Roboto, sans-serif; color: #333; }
.card p { margin: 0 -2px 0 0; font-size: 18.75px; line-height: 32.4px; }
.number {
  position: absolute; top: -26px; right: 18px; color: #f5f5f5;
  font: bold 214px/214px "Liberation Sans", Arial, sans-serif;
  transform: scaleY(1.04); transform-origin: 50% 181px;
}
.number.three { transform: scale(.97, 1.03); }
.number.four { transform: scale(.96, 1.04); }
.number.low { transform: scaleY(1.02); }
.number.one { right: 14px; font-family: Roboto, sans-serif; transform: none; }
.carousel-edge {
  position: absolute; left: 1790px; top: 190px; width: 100px; height: 230px;
  box-shadow: 0 0 60px rgba(0, 0, 0, .13);
}
.to-top {
  position: absolute; left: 1709px; top: 806px; width: 43px; height: 48px; border-radius: 4px;
  background: #f41420; box-shadow: 0 0 20px rgba(0, 0, 0, .2);
  display: flex; align-items: center; justify-content: center;
}
.to-top svg { width: 14px; height: 9px; margin-top: 3px; }
.scrollbar { width: 18px; padding: 10px 0 9px; background: #fbfbfb; display: flex; flex-direction: column; align-items: center; }
.scrollbar svg { width: 12px; height: 10px; }
.scrollbar .down { margin-top: auto; transform: rotate(180deg); }
.thumb { width: 11px; height: 278px; margin-top: 147px; border-radius: 6px; background: #8b8b8b; }
.status {
  position: absolute; left: 0; bottom: 0; width: 165px; height: 27px; padding-left: 6px;
  background: #0078d7; border-radius: 0 5px 0 0; font-size: 13.87px; line-height: 27px;
}

/* Browser sidebar */
.sidebar { display: flex; flex-direction: column; align-items: center; padding: 1px 1px 0 0; }
.sidebar a { height: 50.2px; display: flex; align-items: center; }
.sidebar hr { width: 35px; margin-top: 15px; }
.add { margin-top: 30px; opacity: .8; }
.sidebar .bottom { margin-top: auto; }
.gear { margin: 17px 0; }

/* Taskbar */
.taskbar { flex: none; height: 60px; background: #202020; border-top: 1px solid #404141; display: flex; align-items: center; }
.weather { flex: none; width: 585px; padding-left: 27px; display: flex; align-items: center; gap: 9px; }
.weather svg { width: 28px; height: 28px; margin-top: -3px; }
.weather span, .lang span, .clock span { display: block; line-height: 20px; font-size: 14.4px; }
.weather div, .lang, .clock { padding-bottom: 2px; }
.weather .sub { color: #ccc; }
.start { width: 29px; height: 29px; margin-left: 27px; }
.search {
  width: 275px; height: 40px; margin-left: 17px; padding: 0 5px 0 14px; border-radius: 20px;
  background: #3e3e3e; border: 1px solid #555; display: flex; align-items: center; font-size: 16.2px; color: #ddd;
}
.lens { width: 19px; height: 19px; margin-right: 12px; }
.pets { width: 60px; height: 32px; margin-left: auto; }
.apps { flex: none; display: flex; margin-left: 2px; }
.app { position: relative; width: 55px; height: 50px; display: flex; align-items: center; justify-content: center; }
.app svg { width: 30px; height: 30px; margin-top: -1px; }
.pre { font: 800 8.5px "Open Sans", sans-serif; fill: #201800; }
.run::after { content: ""; position: absolute; bottom: 1px; width: 8px; height: 4px; border-radius: 2px; background: #9a9a9a; }
.current { width: 50px; margin-left: 2.5px; border-radius: 6px; background: #2d2d2d; box-shadow: inset 0 0 0 1px #363636; }
.current::after { width: 20px; background: #4cc2ff; }
.badge {
  position: absolute; left: 29px; top: 3px; width: 20px; height: 20px; border-radius: 50%;
  background: #4cc2ff; color: #000; font-size: 14px; line-height: 19px; text-align: center;
}
.chevron { width: 14px; height: 9px; margin-left: 278px; }
.lang { width: 60px; margin-left: 11px; text-align: center; }
.tray { display: flex; gap: 10px; margin-left: 7px; }
.tray svg { width: 20px; height: 20px; margin-top: -1px; }
.clock { margin-left: auto; text-align: right; }
.clock span { font-size: 14.7px; }
.bell { width: 17px; height: 20px; margin: 0 26px 0 11px; }
```
